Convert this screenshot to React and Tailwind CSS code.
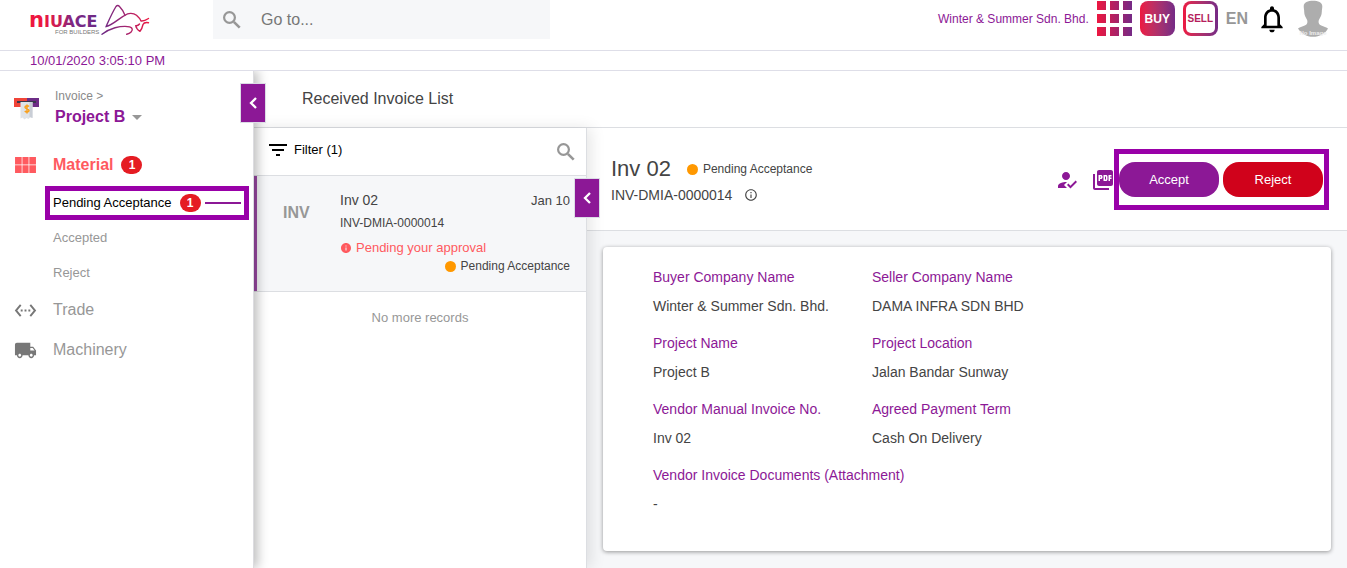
import {
  MdSettingsEthernet,
  MdLocalShipping,
  MdFilterList,
  MdInfo,
  MdInfoOutline,
  MdHowToReg,
  MdPictureAsPdf,
  MdNotificationsNone,
  MdArrowDropDown,
} from "react-icons/md";

function Logo() {
  return (
    <svg viewBox="0 0 122 34" className="h-[34px] w-[122px]" role="img" aria-label="Niuace for Builders">
      <defs>
        <linearGradient id="word" gradientUnits="userSpaceOnUse" x1="0" y1="0" x2="72" y2="0">
          <stop offset="0.2" stopColor="#ed1740" />
          <stop offset="0.45" stopColor="#c01f5c" />
          <stop offset="0.6" stopColor="#7d2784" />
          <stop offset="1" stopColor="#6a2a86" />
        </linearGradient>
        <linearGradient id="bull" gradientUnits="userSpaceOnUse" x1="72" y1="0" x2="120" y2="0">
          <stop offset="0" stopColor="#6a2a86" />
          <stop offset="0.5" stopColor="#a02572" />
          <stop offset="1" stopColor="#ed1740" />
        </linearGradient>
      </defs>
      <text y="24" fontFamily="DejaVu Sans, sans-serif" fontWeight="700" fontSize="16" fill="url(#word)">
        <tspan fontSize="21">n</tspan>
        <tspan>IUACE</tspan>
      </text>
      <text x="26" y="31" fontFamily="Liberation Sans, sans-serif" fontSize="6" fill="#777">
        FOR BUILDERS
      </text>
      <g fill="none" stroke="url(#bull)" strokeWidth="1.4" strokeLinecap="round" strokeLinejoin="round">
        <path d="M77 23.700 C80 17 83 10 87 3.500 Q88.700 1.500 90.500 3.500 Q94 7 96 12.300 C91 14.500 84.500 21.500 77 23.700 Z" />
        <path d="M96 12.300 C99 10 104 9.500 107.500 12.300 C110 14.500 111 15.500 112 18 Q115 18.500 119.500 15.500" />
        <path d="M119.500 19.700 Q115 19 114 21.500 Q113 26 111 28.300 Q107.500 26.500 106.700 22.700 Q109 23 110.500 21" />
        <path d="M73 31.300 C78 27.500 81 26 86 24.700 C92 23.200 101 22.500 103 25.500 C104.500 28 101 30.500 97.700 31.300" />
      </g>
    </svg>
  );
}

function InvoiceIcon() {
  return (
    <svg viewBox="0 0 25 23" className="h-[23px] w-[25px]" aria-hidden="true">
      <path d="M0 1h13v9H0z" fill="#f04438" />
      <path d="M13 1h12v9H13z" fill="#6d2c86" />
      <path d="M3 4h19v2H3z" fill="#39394d" />
      <path d="M6.500 5h12v16l-2-1-2 2-2-1-2 1.500-2-2-2 1z" fill="#dfe3e8" />
      <path d="M15.500 5h3v16l-3-1z" fill="#c9ced6" />
      <path
        d="M15 9.500c-1-1.200-4-1-4 .8 0 2 4 1.200 4 3.200 0 1.800-3 2-4.200.6M13 7.500v9"
        fill="none"
        stroke="#f9a01b"
        strokeWidth="1.500"
      />
    </svg>
  );
}

function SearchIcon() {
  return (
    <svg viewBox="0 0 24 24" className="size-6 shrink-0 text-[#979797]" fill="none" stroke="currentColor" aria-hidden="true">
      <circle cx="9.500" cy="9.500" r="5.400" strokeWidth="2.200" />
      <path d="M13.800 13.800l5.900 5.900" strokeWidth="2.600" />
    </svg>
  );
}

function ChevronIcon() {
  return (
    <svg viewBox="0 0 8 12" className="h-3 w-2" fill="none" stroke="currentColor" strokeWidth="2.300" aria-hidden="true">
      <path d="M7 1L2 6l5 5" />
    </svg>
  );
}

function ModulesIcon() {
  return (
    <svg viewBox="4 5 17 13" className="mr-px h-4 w-[21px]" fill="currentColor" aria-hidden="true">
      <path d="M4 11h5.400V5H4zm0 7h5.400v-6.300H4zm6 0h5v-6.300h-5zm5.600 0H21v-6.300h-5.400zM10 11h5V5h-5zm5.600-6v6H21V5z" />
    </svg>
  );
}

function AppsIcon() {
  const cells = [0, 13, 26];
  return (
    <svg viewBox="0 0 35 35" className="size-[35px]" aria-hidden="true">
      <defs>
        <linearGradient id="apps" gradientUnits="userSpaceOnUse" x1="0" y1="0" x2="35" y2="0">
          <stop offset="0" stopColor="#ed1740" />
          <stop offset="1" stopColor="#752a86" />
        </linearGradient>
      </defs>
      {cells.map((y) => cells.map((x) => <rect key={`${x}-${y}`} x={x} y={y} width="9" height="9" fill="url(#apps)" />))}
    </svg>
  );
}

function Avatar() {
  return (
    <svg viewBox="-1 0 34 37" className="h-[37px] w-[34px]" role="img" aria-label="Profile">
      <path
        d="M16 0.800c5 0 9.300 1.500 9.300 5.500 0 2-.5 3.500-.5 5.500 0 3-1.300 5.500-2.800 8-.6 1.500-.6 3 .2 4.200 1.500 1.800 6 2.500 8.800 4.500C28.500 33.500 22.500 36.800 16 36.800S4 33.500 1 28.500c2.800-2 7.300-2.700 8.800-4.500.8-1.200.8-2.700.2-4.200-1.500-2.500-2.800-5-2.800-8 0-2-.5-3.500-.5-5.500C6.700 2.300 11 .8 16 .8z"
        fill="#adadad"
      />
      <text x="16" y="35" textAnchor="middle" fontFamily="Liberation Sans, sans-serif" fontWeight="700" fontSize="6" fill="#eee">
        No Image
      </text>
    </svg>
  );
}

function Count({ children }) {
  return (
    <span className="flex h-[18px] w-[21px] items-center justify-center rounded-full bg-[#e51c23] text-xs font-bold text-white">
      {children}
    </span>
  );
}

function Status({ className = "" }) {
  return (
    <span className={"flex items-center gap-[5px] text-xs text-[#444] " + className}>
      <span className="size-[11px] rounded-full bg-[#ff9800]" />
      Pending Acceptance
    </span>
  );
}

function CollapseButton({ label, className }) {
  return (
    <button
      type="button"
      aria-label={label}
      className={"absolute z-20 flex h-10 w-[26px] items-center justify-center border border-[#dcdce6] bg-[#8c1896] text-white " + className}
    >
      <ChevronIcon />
    </button>
  );
}

function Header() {
  return (
    <header className="flex h-[51px] items-start border-b border-[#dedee8]">
      <a href="#home" className="mt-[3px] ml-[29px] w-[184px]">
        <Logo />
      </a>
      <label className="flex h-[39px] w-[337px] items-center gap-[17px] bg-[#f6f7f9] pl-[7px]">
        <SearchIcon />
        <input
          type="text"
          aria-label="Go to"
          placeholder="Go to..."
          className="min-w-0 flex-1 bg-transparent text-base outline-none placeholder:text-[#777]"
        />
      </label>
      <div className="ml-auto flex h-[37px] items-center gap-2 pr-[17px]">
        <span className="text-xs text-[#8c1896]">Winter &amp; Summer Sdn. Bhd.</span>
        <button type="button" aria-label="Apps">
          <AppsIcon />
        </button>
        <button
          type="button"
          className="size-[35px] rounded-lg bg-linear-to-r from-[#ed1740] to-[#752a86] text-xs font-bold text-white"
        >
          BUY
        </button>
        <button type="button" className="size-[35px] rounded-lg bg-linear-to-r from-[#ed1740] to-[#752a86] p-[3px]">
          <span className="flex h-full items-center justify-center rounded-[5px] bg-white text-[10px] font-bold text-[#b51e5c]">
            SELL
          </span>
        </button>
        <button type="button" className="text-base font-bold text-[#979797]">
          EN
        </button>
        <button type="button" aria-label="Notifications" className="text-black">
          <MdNotificationsNone size={32} />
        </button>
        <Avatar />
      </div>
    </header>
  );
}

function Sidebar() {
  return (
    <aside className="relative z-10 w-[254px] shrink-0 border-r border-[#dcdce0] bg-white shadow-[4px_0_10px_rgba(0,0,0,0.25)]">
      <CollapseButton label="Collapse menu" className="top-3 left-60" />
      <div className="flex items-center gap-4 pt-4 pl-[14px]">
        <InvoiceIcon />
        <div>
          <p className="text-xs leading-[18px] text-[#8a8a8a]">Invoice &gt;</p>
          <button type="button" className="flex items-center text-base leading-[22px] font-bold text-[#8c1896]">
            Project B
            <MdArrowDropDown size={24} className="text-[#979797]" />
          </button>
        </div>
      </div>
      <nav className="pt-4">
        <a href="#material" className="flex h-10 items-center gap-4 pl-[15px] font-bold text-[#ff5a5f]">
          <ModulesIcon />
          <span className="flex items-center gap-2">
            Material <Count>1</Count>
          </span>
        </a>
        <a
          href="#pending"
          className="mt-px mr-1 ml-[45px] flex h-[34px] items-center gap-2 border-[5px] border-[#9900a8] px-[3px] text-[13px] text-black"
        >
          Pending Acceptance
          <Count>1</Count>
          <span className="-ml-1 h-[2px] flex-1 bg-[#8c1896]" />
        </a>
        <a href="#accepted" className="flex h-[35px] items-center pl-[53px] text-[13px] text-[#979797]">
          Accepted
        </a>
        <a href="#reject" className="flex h-[35px] items-center pl-[53px] text-[13px] text-[#979797]">
          Reject
        </a>
        <a href="#trade" className="flex h-10 items-center gap-4 pl-[14px] text-[#979797]">
          <MdSettingsEthernet size={23} className="text-[#777]" />
          Trade
        </a>
        <a href="#machinery" className="flex h-10 items-center gap-4 pl-[14px] text-[#979797]">
          <MdLocalShipping size={23} className="text-[#777]" />
          Machinery
        </a>
      </nav>
    </aside>
  );
}

function InvoiceList() {
  return (
    <section className="relative z-[5] w-[333px] shrink-0 border-r border-[#dcdee2] bg-white shadow-[4px_0_14px_rgba(0,0,0,0.1)]">
      <CollapseButton label="Collapse list" className="top-[50px] left-80" />
      <div className="flex h-12 items-center border-b border-[#dcdee2] pr-2 pl-3">
        <button type="button" className="flex items-center gap-1 pb-1 text-[13px] text-black">
          <MdFilterList size={24} />
          Filter (1)
        </button>
        <button type="button" aria-label="Search invoices" className="ml-auto">
          <SearchIcon />
        </button>
      </div>
      <a href="#inv02" className="flex h-[116px] border-b border-b-[#dcdee2] bg-[#f6f7f9] pr-4">
        <span className="w-[3px] bg-[#9c4aa5]" />
        <span className="w-[83px] pt-[25px] pl-[26px] font-bold text-[#979797]">INV</span>
        <div className="flex-1 pt-[13px] text-[#444]">
          <div className="flex items-center justify-between">
            <span className="text-sm leading-[23px]">Inv 02</span>
            <span className="text-[13px]">Jan 10</span>
          </div>
          <p className="text-xs leading-[22px]">INV-DMIA-0000014</p>
          <p className="flex items-center gap-1 pt-1 text-[13px] leading-5 text-[#ff5a5f]">
            <MdInfo size={12} />
            Pending your approval
          </p>
          <Status className="justify-end" />
        </div>
      </a>
      <p className="pt-4 text-center text-[13px] text-[#979797]">No more records</p>
    </section>
  );
}

const fields = [
  ["Buyer Company Name", "Winter & Summer Sdn. Bhd."],
  ["Seller Company Name", "DAMA INFRA SDN BHD"],
  ["Project Name", "Project B"],
  ["Project Location", "Jalan Bandar Sunway"],
  ["Vendor Manual Invoice No.", "Inv 02"],
  ["Agreed Payment Term", "Cash On Delivery"],
];

function Field({ label, value, className = "" }) {
  return (
    <div className={"flex flex-col gap-[9px] " + className}>
      <dt className="text-[#8c1896]">{label}</dt>
      <dd className="text-[#444]">{value}</dd>
    </div>
  );
}

function Detail() {
  return (
    <section className="min-w-0 flex-1 bg-[#f6f7f9]">
      <div className="flex h-[103px] items-start border-b border-[#dcdee2] bg-white pr-[18px] pl-6 text-[#444]">
        <div className="pt-[26px]">
          <div className="flex items-center gap-4">
            <h2 className="text-[22px] leading-[30px]">Inv 02</h2>
            <Status />
          </div>
          <p className="flex items-center gap-3 text-sm leading-[22px]">
            INV-DMIA-0000014
            <MdInfoOutline size={14} />
          </p>
        </div>
        <div className="ml-auto flex items-center pt-[21px]">
          <button type="button" aria-label="Approvers" className="mr-3 text-[#8c1896]">
            <MdHowToReg size={24} />
          </button>
          <button type="button" aria-label="Download PDF" className="-mr-px text-[#8c1896]">
            <MdPictureAsPdf size={24} />
          </button>
          <div className="flex h-[61px] items-center gap-1 border-[5px] border-[#9900a8]">
            <button type="button" className="h-[35px] w-[100px] rounded-2xl bg-[#8c1896] text-[13px] text-white">
              Accept
            </button>
            <button type="button" className="mr-[1px] h-[35px] w-[100px] rounded-2xl bg-[#d0021b] text-[13px] text-white">
              Reject
            </button>
          </div>
        </div>
      </div>
      <div className="m-4 rounded bg-white px-[50px] pt-5 pb-[37px] shadow-[0_1px_4px_rgba(0,0,0,0.4)]">
        <dl className="grid grid-cols-[219px_1fr] gap-y-[17px] text-sm leading-5">
          {fields.map(([label, value]) => (
            <Field key={label} label={label} value={value} />
          ))}
          <Field label="Vendor Invoice Documents (Attachment)" value="-" className="col-span-2" />
        </dl>
      </div>
    </section>
  );
}

export default function App() {
  return (
    <div className="flex min-h-screen flex-col bg-white font-['Liberation_Sans',Arial,sans-serif]">
      <Header />
      <div className="h-5 border-b border-[#dedee8] pl-[30px] text-[13px] leading-[19px] text-[#8c1896]">
        10/01/2020 3:05:10 PM
      </div>
      <div className="flex flex-1 overflow-clip">
        <Sidebar />
        <main className="flex min-w-0 flex-1 flex-col">
          <h1 className="h-[57px] border-b border-[#dcdee2] pl-12 leading-[55px] text-[#444]">Received Invoice List</h1>
          <div className="flex flex-1">
            <InvoiceList />
            <Detail />
          </div>
        </main>
      </div>
    </div>
  );
}
